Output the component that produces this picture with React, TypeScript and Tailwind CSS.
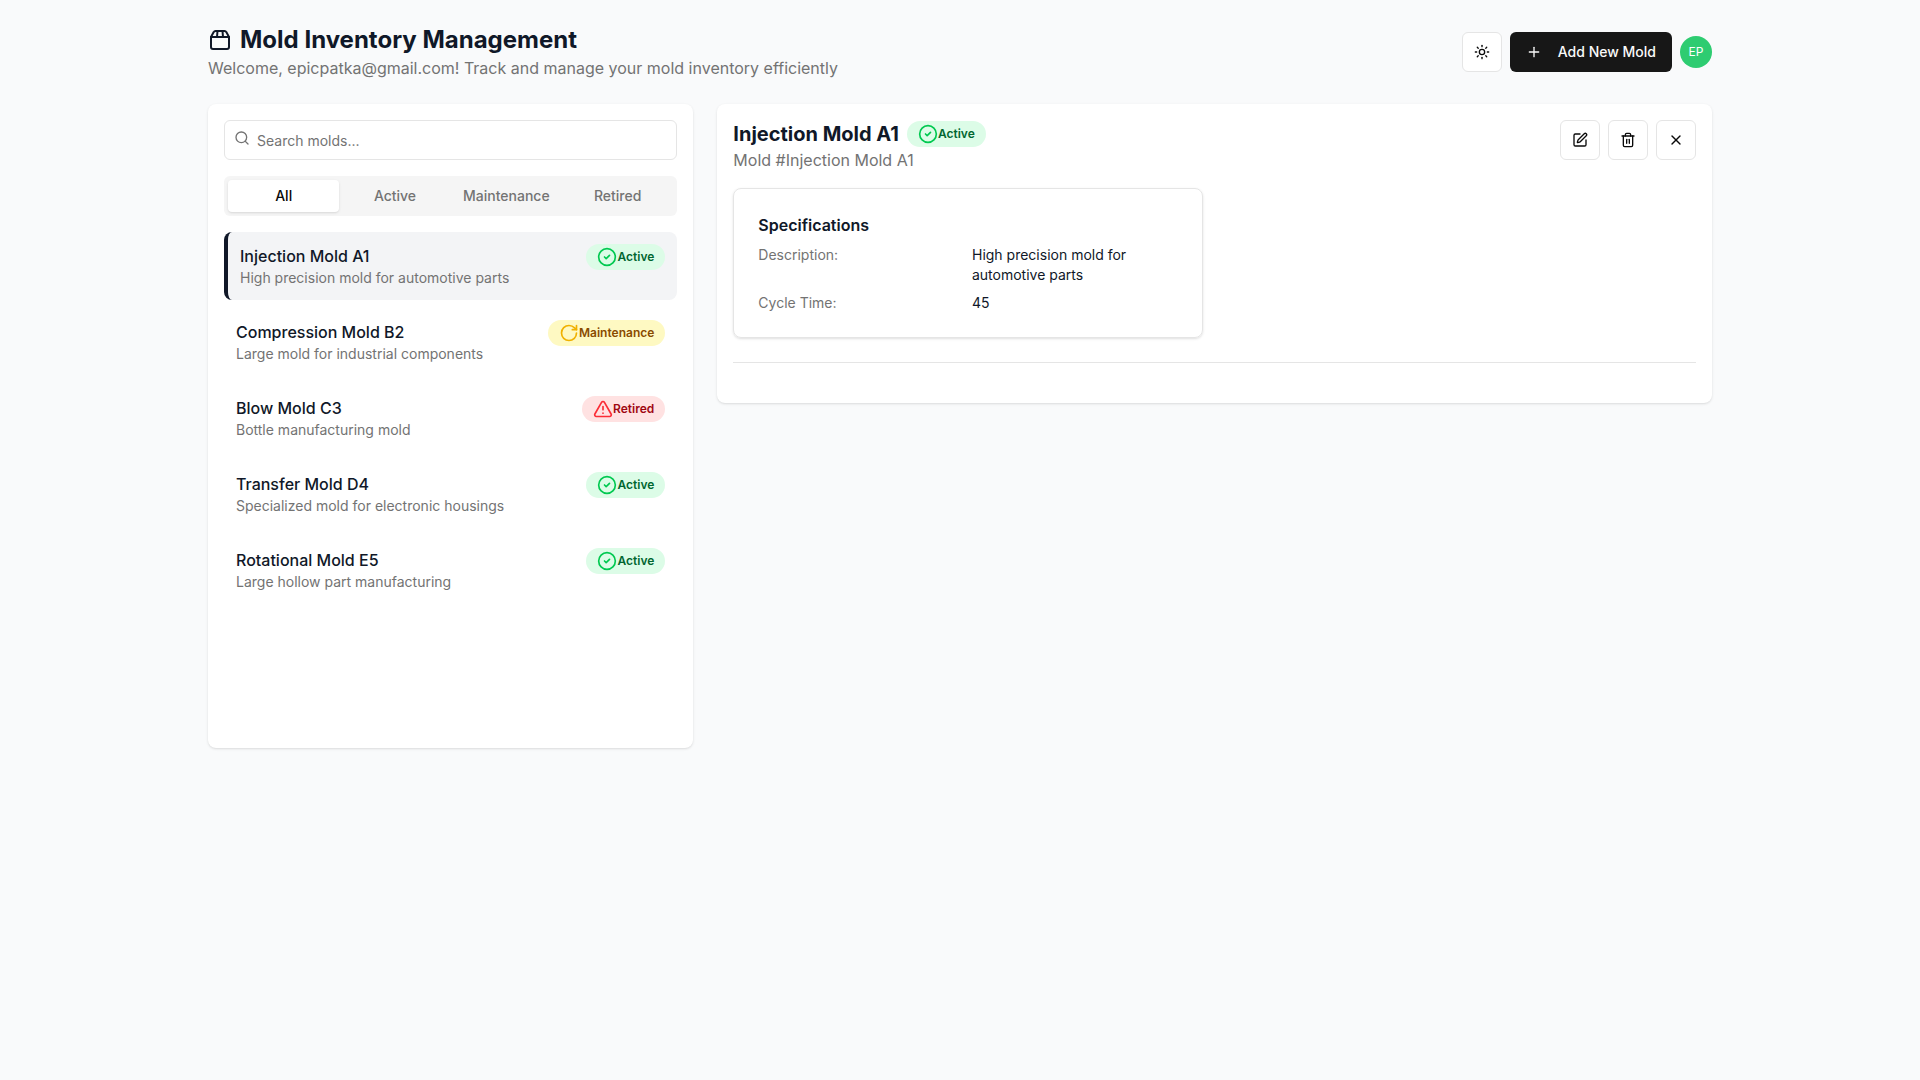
import React from 'react';
import { Search, Sun, Plus, SquarePen, Trash2, X, RotateCw, TriangleAlert, CircleCheck } from 'lucide-react';

type Status = 'Active' | 'Maintenance' | 'Retired';

interface Mold {
  name: string;
  description: string;
  status: Status;
}

const molds: Mold[] = [
  { name: 'Injection Mold A1', description: 'High precision mold for automotive parts', status: 'Active' },
  { name: 'Compression Mold B2', description: 'Large mold for industrial components', status: 'Maintenance' },
  { name: 'Blow Mold C3', description: 'Bottle manufacturing mold', status: 'Retired' },
  { name: 'Transfer Mold D4', description: 'Specialized mold for electronic housings', status: 'Active' },
  { name: 'Rotational Mold E5', description: 'Large hollow part manufacturing', status: 'Active' },
];

const BoxIcon = () => (
  <svg width="24" height="24" viewBox="0 0 24 24" fill="none" stroke="currentColor" strokeWidth="2" strokeLinecap="round" strokeLinejoin="round">
    <path d="M7.5 3h9a2 2 0 0 1 1.8 1.1L21 9v10a2 2 0 0 1-2 2H5a2 2 0 0 1-2-2V9l2.7-4.9A2 2 0 0 1 7.5 3z" />
    <path d="M3 9h18" />
    <path d="M9.5 3L9 9" />
    <path d="M14.5 3L15 9" />
  </svg>
);

const badgeClass = 'inline-flex items-center rounded-full border border-transparent px-2.5 py-0.5 text-xs font-semibold';

const StatusBadge: React.FC<{ status: Status }> = ({ status }) => {
  if (status === 'Active') {
    return (
      <span className={`${badgeClass} bg-[#dcfce7] text-[#016630]`}>
        <CircleCheck size={20} className="text-[#00c950] shrink-0" />
        Active
      </span>
    );
  }
  if (status === 'Maintenance') {
    return (
      <span className={`${badgeClass} bg-[#fef9c2] text-[#894b00]`}>
        <RotateCw size={20} className="text-[#f0b100] shrink-0" />
        Maintenance
      </span>
    );
  }
  return (
    <span className={`${badgeClass} bg-[#ffe2e2] text-[#9f0712]`}>
      <TriangleAlert size={20} className="text-[#fb2c36] shrink-0" />
      Retired
    </span>
  );
};

export default function App() {
  const selected = molds[0];

  return (
    <div className="min-h-screen bg-[#f9fafb] text-[#101828] font-['Inter',sans-serif]">
      <div className="max-w-[1536px] mx-auto px-4 py-6">
        <header className="flex items-center justify-between mb-6">
          <div>
            <h1 className="flex items-center gap-2 text-2xl font-bold h-8">
              <BoxIcon />
              Mold Inventory Management
            </h1>
            <p className="text-base text-[#737373]">
              Welcome, epicpatka@gmail.com! Track and manage your mold inventory efficiently
            </p>
          </div>
          <div className="flex items-center gap-2">
            <button className="w-10 h-10 flex items-center justify-center rounded-md border border-[#e5e5e5] bg-white text-[#0a0a0a]">
              <Sun size={16} />
            </button>
            <button className="h-10 px-4 flex items-center rounded-md bg-[#171717] text-[#fafafa] text-sm font-medium">
              <Plus size={16} className="mr-4" />
              Add New Mold
            </button>
            <div className="w-8 h-8 rounded-full bg-[#2ecc71] text-white text-xs flex items-center justify-center">EP</div>
          </div>
        </header>

        <div className="grid grid-cols-3 gap-6 items-start">
          <aside className="h-[644px] bg-white rounded-lg shadow-sm p-4">
            <div className="relative">
              <Search size={16} className="absolute left-2.5 top-2.5 text-[#737373]" />
              <input
                placeholder="Search molds..."
                className="w-full h-10 pl-8 pr-3 rounded-md border border-[#e5e5e5] bg-white text-sm placeholder:text-[#737373] outline-none"
              />
            </div>
            <div className="grid grid-cols-4 h-10 mt-4 p-1 rounded-md bg-[#f5f5f5] text-sm font-medium text-[#737373]">
              <button className="rounded-sm bg-white text-[#0a0a0a] shadow-sm">All</button>
              <button>Active</button>
              <button>Maintenance</button>
              <button>Retired</button>
            </div>
            <ul className="mt-4 flex flex-col gap-2">
              {molds.map((mold, i) => (
                <li
                  key={mold.name}
                  className={
                    i === 0
                      ? 'h-[68px] flex items-start justify-between p-3 rounded-lg bg-[#f3f4f6] border-l-4 border-[#101828]'
                      : 'h-[68px] flex items-start justify-between p-3 rounded-lg'
                  }
                >
                  <div>
                    <div className="font-medium leading-6">{mold.name}</div>
                    <div className="text-sm leading-5 text-[#737373]">{mold.description}</div>
                  </div>
                  <StatusBadge status={mold.status} />
                </li>
              ))}
            </ul>
          </aside>

          <main className="col-span-2 bg-white rounded-lg shadow-sm p-4">
            <div className="flex items-start justify-between">
              <div>
                <div className="flex items-center gap-2">
                  <h2 className="text-xl font-bold">{selected.name}</h2>
                  <StatusBadge status={selected.status} />
                </div>
                <p className="text-base text-[#737373]">Mold #{selected.name}</p>
              </div>
              <div className="flex items-center gap-2 text-[#0a0a0a]">
                <button className="w-10 h-10 flex items-center justify-center rounded-md border border-[#e5e5e5] bg-white">
                  <SquarePen size={16} />
                </button>
                <button className="w-10 h-10 flex items-center justify-center rounded-md border border-[#e5e5e5] bg-white">
                  <Trash2 size={16} />
                </button>
                <button className="w-10 h-10 flex items-center justify-center rounded-md border border-[#e5e5e5] bg-white">
                  <X size={16} />
                </button>
              </div>
            </div>

            <div className="grid grid-cols-2 gap-6 mt-4">
              <div className="rounded-lg border border-[#e5e5e5] shadow-sm p-6">
                <h3 className="font-semibold">Specifications</h3>
                <div className="grid grid-cols-2 gap-2 mt-2 text-sm">
                  <div className="text-[#737373]">Description:</div>
                  <div>{selected.description}</div>
                  <div className="text-[#737373]">Cycle Time:</div>
                  <div>45</div>
                </div>
              </div>
            </div>

            <div className="mt-6 border-t border-[#e5e5e5] pt-6 h-[25px]" />
          </main>
        </div>
      </div>
    </div>
  );
}
